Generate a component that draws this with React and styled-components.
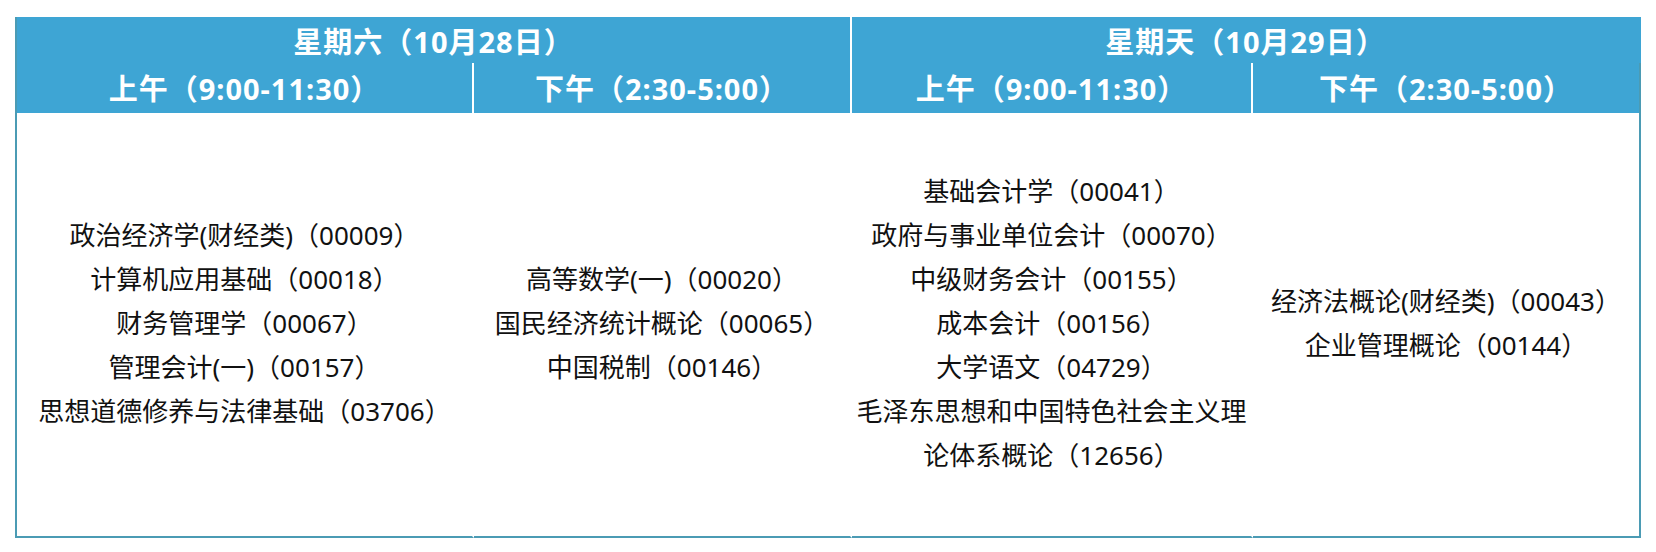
import React from "react";
import styled, { createGlobalStyle } from "styled-components";

const days = [
  {
    title: "星期六（10月28日）",
    periods: [
      {
        label: "上午（9:00-11:30）",
        courses: [
          "政治经济学(财经类)（00009）",
          "计算机应用基础（00018）",
          "财务管理学（00067）",
          "管理会计(一)（00157）",
          "思想道德修养与法律基础（03706）",
        ],
      },
      {
        label: "下午（2:30-5:00）",
        courses: ["高等数学(一)（00020）", "国民经济统计概论（00065）", "中国税制（00146）"],
      },
    ],
  },
  {
    title: "星期天（10月29日）",
    periods: [
      {
        label: "上午（9:00-11:30）",
        courses: [
          "基础会计学（00041）",
          "政府与事业单位会计（00070）",
          "中级财务会计（00155）",
          "成本会计（00156）",
          "大学语文（04729）",
          "毛泽东思想和中国特色社会主义理论体系概论（12656）",
        ],
      },
      {
        label: "下午（2:30-5:00）",
        courses: ["经济法概论(财经类)（00043）", "企业管理概论（00144）"],
      },
    ],
  },
];

const widths = [457, 378, 401, 388];

const App = () => {
  const periods = days.flatMap((d) => d.periods);
  return (
    <>
      <GlobalStyle />
      <Page>
        <Schedule>
          {days.map((day, i) => (
            <DayHead key={day.title} last={i === days.length - 1}>
              {day.title}
            </DayHead>
          ))}
          {periods.map((p, i) => (
            <PeriodHead key={i} last={i === periods.length - 1}>
              {p.label}
            </PeriodHead>
          ))}
          {periods.map((p, i) => (
            <Cell key={i} last={i === periods.length - 1}>
              {p.courses.map((c) => (
                <Course key={c}>{c}</Course>
              ))}
            </Cell>
          ))}
        </Schedule>
      </Page>
    </>
  );
};

export default App;

const GlobalStyle = createGlobalStyle`
  html, body {
    margin: 0;
    padding: 0;
    background: #ffffff;
  }
  body {
    font-family: "Noto Sans", "Noto Sans CJK SC", sans-serif;
  }
`;

const Page = styled.div`
  padding: 17px 0 0 15px;
`;

const Schedule = styled.div`
  display: grid;
  grid-template-columns: ${widths.map((w) => w + "px").join(" ")};
  grid-template-rows: 46px 50px 425px;
  width: 1626px;
  border-left: 2px solid #4b9bb4;
`;

const DayHead = styled.div`
  grid-column: span 2;
  display: flex;
  align-items: center;
  justify-content: center;
  background: #3ea5d4;
  color: #ffffff;
  font-size: 29px;
  font-weight: 700;
  letter-spacing: 1px;
  border-right: 2px solid ${(p) => (p.last ? "#3ea5d4" : "#ffffff")};
`;

const PeriodHead = styled.div`
  display: flex;
  align-items: center;
  justify-content: center;
  background: #3ea5d4;
  color: #ffffff;
  font-size: 29px;
  font-weight: 700;
  letter-spacing: 1px;
  padding-bottom: 2px;
  border-right: 2px solid ${(p) => (p.last ? "#4b9bb4" : "#ffffff")};
`;

const Cell = styled.div`
  display: flex;
  flex-direction: column;
  justify-content: center;
  align-items: center;
  text-align: center;
  padding: 0 4px 4px;
  background: #ffffff;
  color: #111111;
  font-size: 26px;
  border-right: 2px solid ${(p) => (p.last ? "#4b9bb4" : "#ffffff")};
  border-bottom: 2px solid #4b9bb4;
`;

const Course = styled.div`
  line-height: 44px;
`;
